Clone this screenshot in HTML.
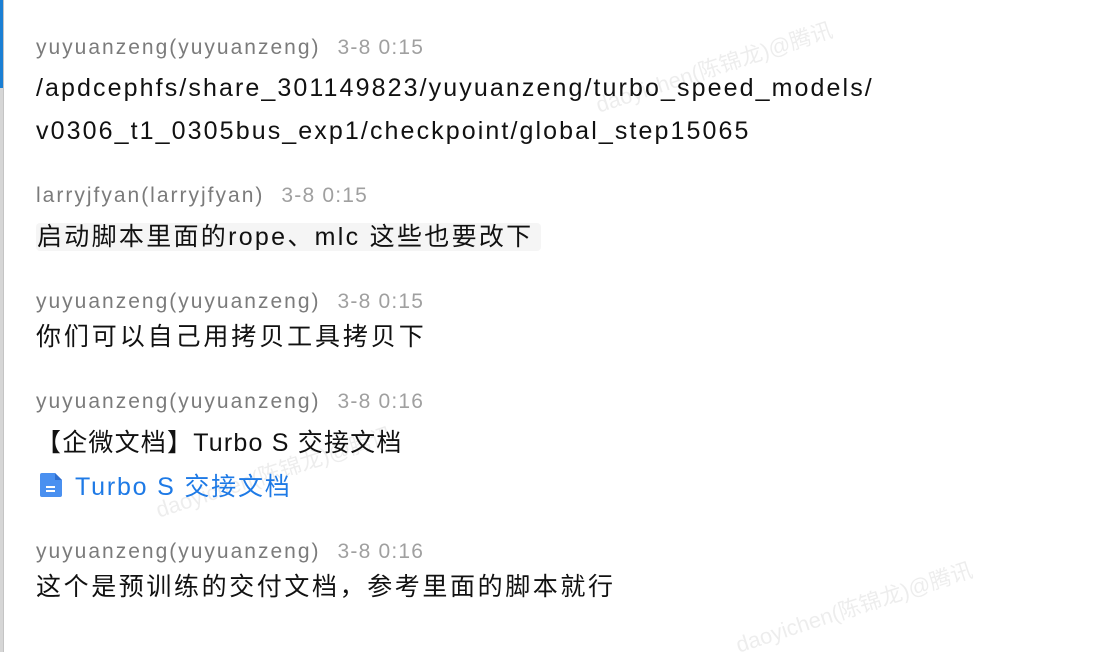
<!DOCTYPE html>
<html><head><meta charset="utf-8"><style>
body{margin:0;width:1118px;height:652px;background:#fff;overflow:hidden;position:relative;font-family:"Liberation Sans","Noto Sans CJK SC",sans-serif}
.strip{position:absolute;left:0;top:0;width:3px;height:652px;background:#d6d6d6}
.strip2{position:absolute;left:0;top:0;width:3px;height:88px;background:#1a7fd4}
.line{position:absolute;left:3px;top:0;width:1px;height:652px;background:#c4c4c4}
.n{position:absolute;left:36px;font-size:21px;color:#7b7b7b;white-space:nowrap;line-height:26px;letter-spacing:2px}
.n span{color:#a0a0a0;margin-left:17px;letter-spacing:1.2px}
.b{position:absolute;left:36px;font-size:25px;color:#111;white-space:nowrap;line-height:43px;letter-spacing:2.1px}
.hl{background:#f5f5f5;border-radius:4px;padding:0 8px 0 1px;letter-spacing:2.3px}
.wm{position:absolute;font-size:22px;color:rgba(0,0,0,0.07);transform:rotate(-18deg);white-space:nowrap}
.link{color:#1e7ae6}
</style></head><body>
<div class="strip"></div><div class="strip2"></div><div class="line"></div>
<div class="wm" style="left:590px;top:50px">daoyichen(陈锦龙)@腾讯</div>
<div class="wm" style="left:150px;top:455px">daoyichen(陈锦龙)@腾讯</div>
<div class="wm" style="left:730px;top:590px">daoyichen(陈锦龙)@腾讯</div>
<div class="n" style="top:35px">yuyuanzeng(yuyuanzeng)<span>3-8 0:15</span></div>
<div class="b" style="top:67px">/apdcephfs/share_301149823/yuyuanzeng/turbo_speed_models/<br>v0306_t1_0305bus_exp1/checkpoint/global_step15065</div>
<div class="n" style="top:183px">larryjfyan(larryjfyan)<span>3-8 0:15</span></div>
<div class="b" style="top:216px"><span class="hl">启动脚本里面的rope、mlc 这些也要改下</span></div>
<div class="n" style="top:289px">yuyuanzeng(yuyuanzeng)<span>3-8 0:15</span></div>
<div class="b" style="top:316px;letter-spacing:2.9px">你们可以自己用拷贝工具拷贝下</div>
<div class="n" style="top:389px">yuyuanzeng(yuyuanzeng)<span>3-8 0:16</span></div>
<div class="b" style="top:422px;letter-spacing:1.2px">【企微文档】Turbo S 交接文档</div>
<div class="b link" style="top:466px;left:38px;letter-spacing:1.8px"><svg width="28" height="28" viewBox="0 0 28 28" style="vertical-align:-4px;margin-right:9px"><path d="M4 2h13l7 7v15a2 2 0 0 1-2 2H4a2 2 0 0 1-2-2V4a2 2 0 0 1 2-2z" fill="#4a90f0"/><path d="M17 2l7 7h-7z" fill="#2f6fd0"/><rect x="8" y="15" width="9" height="2" fill="#fff"/><rect x="8" y="19" width="9" height="2" fill="#fff"/></svg>Turbo S 交接文档</div>
<div class="n" style="top:539px">yuyuanzeng(yuyuanzeng)<span>3-8 0:16</span></div>
<div class="b" style="top:566px;letter-spacing:2.6px">这个是预训练的交付文档，参考里面的脚本就行</div>
</body></html>
